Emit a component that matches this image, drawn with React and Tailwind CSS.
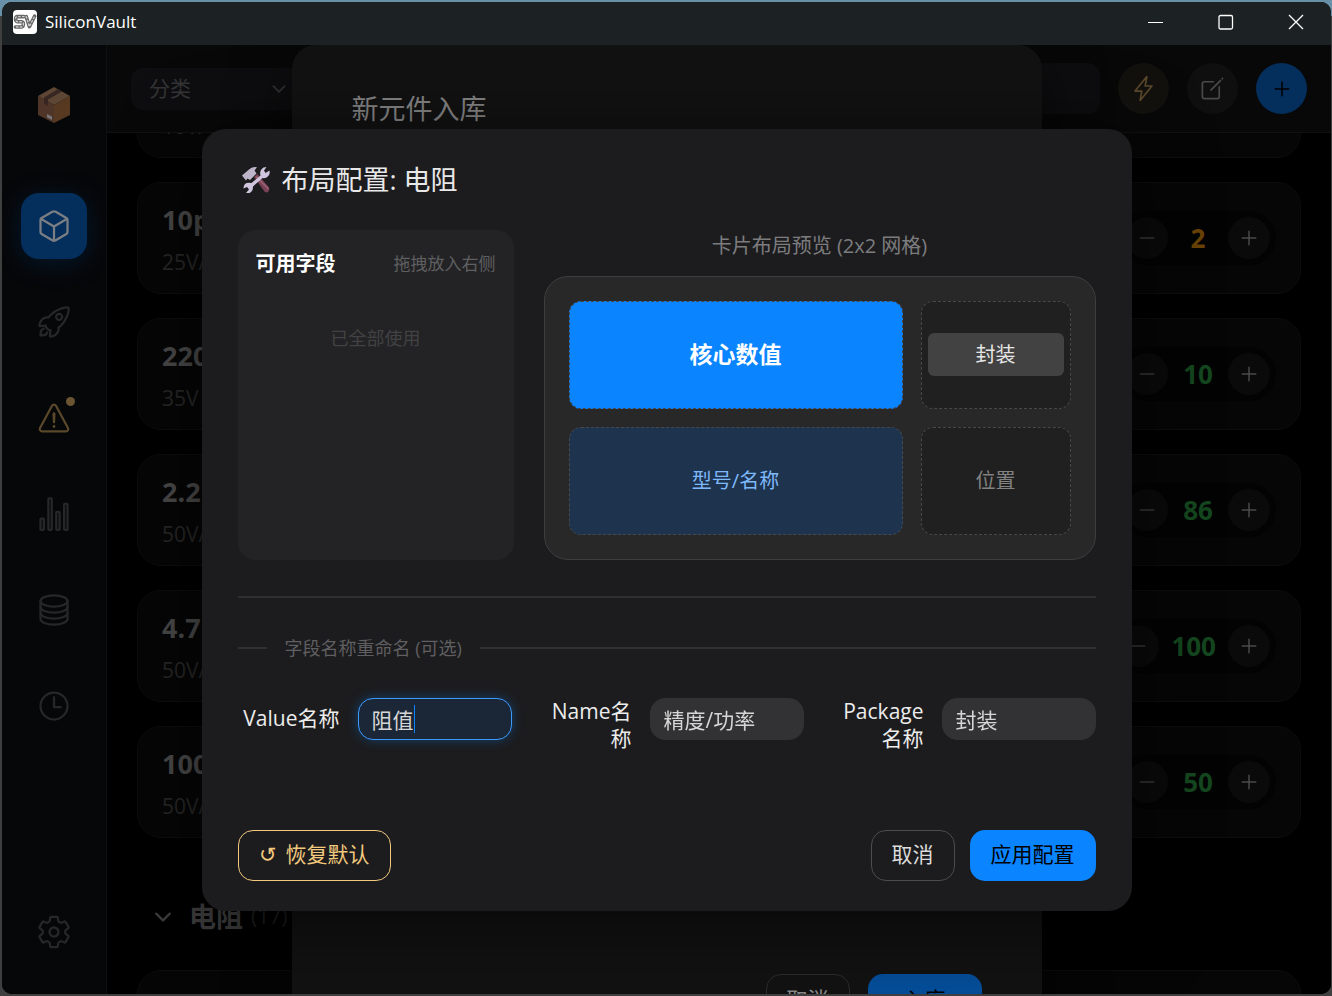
import React, { useEffect, useRef, useState } from 'react';
import {
  IoAddOutline,
  IoChevronDownOutline,
  IoCreateOutline,
  IoCubeOutline,
  IoFlashOutline,
  IoRemoveOutline,
  IoRocketOutline,
  IoServerOutline,
  IoSettingsOutline,
  IoStatsChartOutline,
  IoTimeOutline,
  IoWarningOutline
} from 'react-icons/io5';

const navItems = [
  { id: 'inventory', label: '库存', icon: IoCubeOutline },
  { id: 'project', label: '项目', icon: IoRocketOutline },
  { id: 'alert', label: '预警', icon: IoWarningOutline, warn: true },
  { id: 'stats', label: '统计', icon: IoStatsChartOutline },
  { id: 'backup', label: '数据', icon: IoServerOutline },
  { id: 'history', label: '历史', icon: IoTimeOutline }
];

const capacitors = [
  { value: '1pF', sub: '10V/10%', qty: 20 },
  { value: '10pF', sub: '25V/10%', qty: 2, low: true },
  { value: '220uF', sub: '35V', qty: 10 },
  { value: '2.2uF', sub: '50V/10%', qty: 86 },
  { value: '4.7uF', sub: '50V/10%', qty: 100 },
  { value: '100nF', sub: '50V/10%', qty: 50 }
];

const fields = [
  { id: 'value', label: 'Value名称' },
  { id: 'name', label: 'Name名称' },
  { id: 'package', label: 'Package名称' }
];

const AppLogo = () => (
  <svg viewBox="0 0 24 24" className="h-6 w-6" aria-hidden="true">
    <rect width="24" height="24" rx="4" fill="#fff" />
    <g fill="none" strokeLinecap="round" strokeLinejoin="round">
      <path
        d="M11 6.6H4.4Q2.6 6.6 2.6 9T4.6 11.8H8.6Q10.4 12 10.4 14.2T8.6 17H2.4M13.2 6.6L16.4 16.6L21.6 6.2"
        stroke="#666"
        strokeWidth="3.6"
      />
      <path
        d="M11 6.6H4.4Q2.6 6.6 2.6 9T4.6 11.8H8.6Q10.4 12 10.4 14.2T8.6 17H2.4M13.2 6.6L16.4 16.6L21.6 6.2"
        stroke="#ccc"
        strokeWidth="1.4"
        strokeDasharray="1.5 2.4"
      />
    </g>
  </svg>
);

const BoxIcon = () => (
  <svg viewBox="0 0 32 36" className="h-9 w-8" aria-hidden="true">
    <path d="M16 0L32 9L16 18L0 9Z" fill="#5d4734" />
    <path d="M0 9L16 18V36L0 28Z" fill="#4f3527" />
    <path d="M32 9L16 18V36L32 28Z" fill="#573922" />
    <path d="M20 2L24 4.500L10 12.500V19L6 16.500V10.500Z" fill="#372622" />
    <path d="M9 27L14 29.500V33L9 30.500Z" fill="#77717a" />
  </svg>
);

const ToolsIcon = () => (
  <svg viewBox="0 0 28 28" className="h-7 w-7" aria-hidden="true">
    <path d="M12 11L15.500 8L27 21.500Q28 24 26 26Q24 27 22.500 25.500Z" fill="#7b4157" />
    <path d="M14 10.500L26.500 23" stroke="#9a6270" strokeWidth="1.600" />
    <path d="M0 9.500L7 3.500Q10 0 15 1.200L12.500 4.500L14.500 7.500L8 14L5.500 12.500L4 14.500Z" fill="#bdb4c9" />
    <path
      d="M18.500 9.500Q17 4.500 21.500 1.500L24.500 1L22 4.500L23.500 7L27.500 4.500Q28.500 9 25 11.200Q22.500 12.500 20.500 12L11 20.500Q11 25.500 7.500 27L4 27L7 23.500L5 21L1.500 22.500Q1.500 17.500 6 16.800L9.500 17Z"
      fill="#cfc5df"
    />
  </svg>
);

const TitleBar = () => (
  <div className="flex h-[43px] shrink-0 items-center justify-between bg-[#1c2223] pl-[11px] text-white">
    <div className="flex h-10 items-center gap-2 self-start">
      <AppLogo />
      <span className="text-[17px]">SiliconVault</span>
    </div>
    <div className="flex h-10 self-start">
      <button className="flex w-[70px] items-center justify-center" aria-label="最小化">
        <svg viewBox="0 0 16 16" className="h-4 w-4"><path d="M0 8.500H15" stroke="#fff" /></svg>
      </button>
      <button className="flex w-[70px] items-center justify-center" aria-label="最大化">
        <svg viewBox="0 0 16 16" className="h-4 w-4">
          <rect x="1" y="1.500" width="13.500" height="13.500" rx="1.500" fill="none" stroke="#fff" strokeWidth="1.300" />
        </svg>
      </button>
      <button className="flex w-[70px] items-center justify-center" aria-label="关闭">
        <svg viewBox="0 0 16 16" className="h-4 w-4"><path d="M1 1L15 15M15 1L1 15" stroke="#fff" strokeWidth="1.300" /></svg>
      </button>
    </div>
  </div>
);

const Sidebar = () => (
  <aside className="flex w-[105px] shrink-0 flex-col items-center border-r border-[#0e0f11] bg-[#060709] pt-[42px] pb-[29px]">
    <BoxIcon />
    <nav className="mt-[70px] flex flex-col gap-[30px]">
      {navItems.map(({ id, label, icon: Icon, warn }) => (
        <button
          key={id}
          aria-label={label}
          className={`relative flex h-[66px] w-[66px] items-center justify-center rounded-[18px] ${
            id === 'inventory'
              ? 'bg-[#042e5c] text-[#7b7f84] shadow-[0_4px_24px_rgba(4,46,92,0.45)]'
              : warn
                ? 'text-[#5a482b]'
                : 'text-[#262728]'
          }`}
        >
          <Icon className="h-9 w-9" />
          {warn && <span className="absolute top-3 right-3 h-[9px] w-[9px] rounded-full bg-[#6a5432]" />}
        </button>
      ))}
    </nav>
    <button aria-label="设置" className="mt-auto flex h-[66px] w-[66px] items-center justify-center text-[#262728]">
      <IoSettingsOutline className="h-9 w-9" />
    </button>
  </aside>
);

const Toolbar = () => (
  <header className="flex h-[88px] shrink-0 items-center gap-[18px] border-b border-[#111112] bg-[#080809] px-6">
    <button className="flex h-[42px] w-[176px] items-center justify-between rounded-xl bg-[#0e0e10] px-[18px] text-[21px] text-[#343436]">
      分类
      <IoChevronDownOutline className="h-5 w-5" />
    </button>
    <input aria-label="搜索" className="h-[51px] min-w-0 flex-1 rounded-xl bg-[#0e0e10] px-4 outline-none" />
    <button aria-label="快速操作" className="flex h-[51px] w-[51px] items-center justify-center rounded-full bg-[#13110d] text-[#5a482b]">
      <IoFlashOutline className="h-[27px] w-[27px]" />
    </button>
    <button aria-label="编辑" className="flex h-[51px] w-[51px] items-center justify-center rounded-full bg-[#0f0f10] text-[#4a4a4b]">
      <IoCreateOutline className="h-[27px] w-[27px]" />
    </button>
    <button aria-label="新增" className="flex h-[51px] w-[51px] items-center justify-center rounded-full bg-[#042e5c] text-black">
      <IoAddOutline className="h-6 w-6" />
    </button>
  </header>
);

const StockCard = ({ item }) => (
  <div className="flex h-28 shrink-0 items-center justify-between rounded-3xl border border-[#0d0d0d] bg-[#060606] px-6">
    <div>
      <div className="text-[27px] leading-10 font-bold text-[#4a4a4a]">{item.value}</div>
      <div className="mt-2 text-[21px] leading-7 text-[#282828]">{item.sub}</div>
    </div>
    <div className="flex items-center rounded-full bg-[#030303] p-[6px]">
      <button aria-label="减少" className="flex h-[42px] w-[42px] items-center justify-center rounded-full bg-[#0a0a0a] text-[#3a3a3a]">
        <IoRemoveOutline className="h-6 w-6" />
      </button>
      <span className={`min-w-[60px] px-3 text-center text-[26px] leading-8 font-bold ${item.low ? 'text-[#6a4206]' : 'text-[#14471f]'}`}>
        {item.qty}
      </span>
      <button aria-label="增加" className="flex h-[42px] w-[42px] items-center justify-center rounded-full bg-[#0a0a0a] text-[#4a4a4a]">
        <IoAddOutline className="h-6 w-6" />
      </button>
    </div>
  </div>
);

const StockList = () => (
  <div className="min-h-0 flex-1 overflow-hidden bg-black px-[30px]">
    <div className="-mt-[87px] flex flex-col gap-6">
      {capacitors.map((item) => (
        <StockCard key={item.value} item={item} />
      ))}
      <div className="mt-[30px] mb-1 flex h-[50px] items-center text-[#3e3e3e]">
        <IoChevronDownOutline className="mr-[14px] ml-[14px] h-6 w-6" />
        <h2 className="text-[27px] font-bold">电阻</h2>
        <span className="ml-2 text-[21px] text-[#202020]">(17)</span>
      </div>
      <StockCard item={{ value: '0R', sub: '1%', qty: 100 }} />
    </div>
  </div>
);

const EntryDialog = () => (
  <div className="absolute inset-0 flex items-start justify-center overflow-hidden">
    <div className="flex h-[calc(100%+67px)] w-full max-w-[750px] flex-col justify-between rounded-3xl bg-[#121213] px-[60px] py-9 shadow-[0_20px_60px_rgba(0,0,0,0.5)]">
      <h2 className="text-[27px] leading-[56px] text-[#858585]">新元件入库</h2>
      <div className="flex justify-end gap-[18px] text-[21px]">
        <button className="h-[51px] rounded-[15px] border border-[#2c2c2d] px-5 text-[#8a8a8a]">取消</button>
        <button className="h-[51px] rounded-[15px] bg-[#054e9a] px-9 text-black">入库</button>
      </div>
    </div>
  </div>
);

const LayoutPreview = () => (
  <div className="flex min-w-0 flex-1 flex-col">
    <p className="pb-[14px] text-center text-[20px] leading-8 text-[#7c7c7e]">卡片布局预览 (2x2 网格)</p>
    <div className="grid flex-1 grid-cols-[minmax(0,1fr)_150px] grid-rows-2 gap-[18px] rounded-3xl border border-[#3e3e40] bg-[#282828] p-6 text-[20px]">
      <div className="flex items-center justify-center rounded-xl border border-dashed border-[#45484c] bg-[#0a84ff] text-[23px] font-bold text-white">
        核心数值
      </div>
      <div className="flex items-center justify-center rounded-xl border border-dashed border-[#484848] bg-[#202020] p-[6px]">
        <div className="w-full rounded-md bg-[#424242] text-center leading-[43px] text-[#e6e6e6]">封装</div>
      </div>
      <div className="flex items-center justify-center rounded-xl border border-dashed border-[#45484c] bg-[#1e334d] text-[#7db8fa]">
        型号/名称
      </div>
      <div className="flex items-center justify-center rounded-xl border border-dashed border-[#484848] bg-[#202020] text-[#828282]">
        位置
      </div>
    </div>
  </div>
);

const LayoutDialog = () => {
  const [names, setNames] = useState({ value: '阻值', name: '精度/功率', package: '封装' });
  const firstInput = useRef(null);

  useEffect(() => {
    const el = firstInput.current;
    el.focus();
    el.setSelectionRange(el.value.length, el.value.length);
  }, []);

  return (
    <div className="absolute inset-0 flex items-center justify-center">
      <div
        role="dialog"
        aria-labelledby="layout-title"
        className="w-full max-w-[930px] rounded-3xl bg-[#1c1c1e] px-9 py-[30px] shadow-[0_12px_80px_rgba(0,0,0,0.6)]"
      >
        <div className="flex items-center gap-3 pl-1">
          <ToolsIcon />
          <h1 id="layout-title" className="text-[27px] leading-[42px] text-[#e8e8e8]">布局配置: 电阻</h1>
        </div>

        <div className="mt-[29px] flex h-[330px] gap-[30px]">
          <section className="w-[276px] shrink-0 rounded-[18px] bg-[#232325] p-[18px]">
            <div className="flex items-center justify-between leading-8">
              <h3 className="text-[20px] font-bold text-white">可用字段</h3>
              <span className="text-[17px] text-[#5f5f61]">拖拽放入右侧</span>
            </div>
            <p className="mt-[44px] text-center text-[18px] leading-7 text-[#424244]">已全部使用</p>
          </section>
          <LayoutPreview />
        </div>

        <hr className="mt-9 border-t-2 border-[#303032]" />

        <div className="mt-[34px] flex items-center gap-[18px] text-[18px] leading-8 text-[#5f5f61]">
          <span className="h-[2px] w-[29px] bg-[#303032]" />
          字段名称重命名 (可选)
          <span className="h-[2px] flex-1 bg-[#303032]" />
        </div>

        <div className="mt-[34px] grid grid-cols-3 gap-[18px]">
          {fields.map((field) => (
            <div key={field.id} className="flex items-start gap-[18px]">
              <label
                htmlFor={field.id}
                className="flex min-h-[42px] w-[102px] shrink-0 items-center justify-end pl-[2px] text-right text-[21px] leading-[27px] text-[#ececec]"
              >
                {field.label}
              </label>
              <div className="relative min-w-0 flex-1">
                <input
                  id={field.id}
                  ref={field.id === 'value' ? firstInput : null}
                  value={names[field.id]}
                  onChange={(e) => setNames({ ...names, [field.id]: e.target.value })}
                  className="peer block h-[42px] w-full rounded-[15px] border border-[#323234] bg-[#323234] px-[13px] text-[21px] leading-7 text-[#d6d6d6] caret-transparent outline-none focus:border-[#3b9bff] focus:bg-[#1b2636] focus:shadow-[0_0_12px_rgba(10,132,255,0.35)]"
                />
                <span
                  className="absolute top-[7px] hidden h-7 w-px bg-[#0a84ff] peer-focus:block"
                  style={{ left: 14 + names[field.id].length * 21 }}
                />
              </div>
            </div>
          ))}
        </div>

        <div className="mt-[78px] flex items-center gap-[15px] text-[21px]">
          <button className="mr-auto flex h-[51px] items-center gap-[9px] rounded-[15px] border border-[#f2c97d] px-5 text-[#f2c97d]">
            <span>↺</span>
            恢复默认
          </button>
          <button className="h-[51px] rounded-[15px] border border-[#4c4c4e] px-5 text-[#dcdcdc]">取消</button>
          <button className="h-[51px] rounded-[15px] bg-[#0a84ff] px-[21px] text-black">应用配置</button>
        </div>
      </div>
    </div>
  );
};

function App() {
  return (
    <div className="h-screen bg-[linear-gradient(#6890a8_16px,#3f3f3f_16px)] py-[2px] pr-px pl-[2px] font-['Open_Sans','Noto_Sans_CJK_SC',sans-serif]">
      <div className="flex h-full flex-col overflow-hidden rounded-[10px] bg-black">
        <TitleBar />
        <div className="relative flex min-h-0 flex-1">
          <Sidebar />
          <main className="flex min-w-0 flex-1 flex-col">
            <Toolbar />
            <StockList />
          </main>
          <EntryDialog />
          <LayoutDialog />
        </div>
      </div>
    </div>
  );
}

export default App;
